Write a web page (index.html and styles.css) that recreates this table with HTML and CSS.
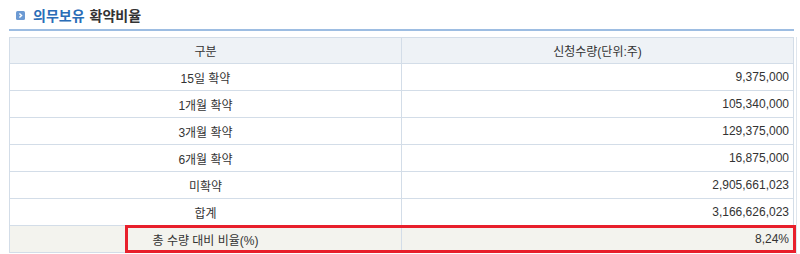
FILE: index.html
```html
<!DOCTYPE html>
<html lang="ko">
<head>
<meta charset="utf-8">
<link rel="stylesheet" href="styles.css">
</head>
<body>
<div class="page">
  <div class="section">
    <h2 class="title">
      <span class="ico"><svg width="9" height="9" viewBox="0 0 9 9"><rect x="0" y="0" width="9" height="9" rx="1.5" fill="#6c9ad3"/><path d="M3.4 2.4 L5.6 4.5 L3.4 6.6" fill="none" stroke="#fff" stroke-width="1.4"/></svg></span>
      <span class="blue">의무보유</span><span class="dark">확약비율</span>
    </h2>
    <div class="rule"></div>
    <div class="tablewrap">
      <table class="tbl">
        <thead>
          <tr><th>구분</th><th>신청수량(단위:주)</th></tr>
        </thead>
        <tbody>
          <tr><td class="c">15일 확약</td><td class="r">9,375,000</td></tr>
          <tr><td class="c">1개월 확약</td><td class="r">105,340,000</td></tr>
          <tr><td class="c">3개월 확약</td><td class="r">129,375,000</td></tr>
          <tr><td class="c">6개월 확약</td><td class="r">16,875,000</td></tr>
          <tr><td class="c">미확약</td><td class="r">2,905,661,023</td></tr>
          <tr><td class="c">합계</td><td class="r">3,166,626,023</td></tr>
          <tr class="total"><td class="c">총 수량 대비 비율(%)</td><td class="r">8,24%</td></tr>
        </tbody>
      </table>
      <div class="mark"></div>
    </div>
  </div>
  <div class="sliver"></div>
</div>
</body>
</html>
```
FILE: styles.css
```css
html, body { margin: 0; padding: 0; background: #fff; }
body { font-family: "Liberation Sans", "Noto Sans CJK KR", sans-serif; color: #333; }
.page { display: flex; width: 800px; height: 254px; overflow: hidden; }
.section { width: 785px; margin-left: 9px; }
.title {
  margin: 0; height: 29px; display: flex; align-items: center; gap: 5px;
  padding-left: 7px; font-size: 14px; font-weight: bold;
  font-family: "Noto Sans CJK KR", sans-serif; letter-spacing: 0;
}
.ico { display: flex; margin-right: 3px; margin-top: 1px; }
.blue { color: #2a6db7; }
.dark { color: #333; }
.rule { height: 2px; background: #9dbde2; margin-bottom: 6px; }
.tablewrap { position: relative; }
.tbl { width: 785px; border-collapse: collapse; table-layout: fixed; font-size: 12px; }
.tbl th, .tbl td { border: 1px solid #d3dde8; height: 26px; padding: 0 4px; font-weight: normal; }
.tbl th { background: #eef2f6; color: #333; text-align: center; height: 25px; }
.tbl td.c { text-align: center; }
.tbl td.r { text-align: right; }
.tbl tr.total td { background: #f3f3ee; }
.mark {
  position: absolute; left: 116px; top: 188px; width: 665px; height: 22px;
  border: 3px solid #e81f2b;
}
.sliver { width: 1px; margin-left: 2px; margin-top: 37px; background: #dfe6ee; height: 217px; }
```
